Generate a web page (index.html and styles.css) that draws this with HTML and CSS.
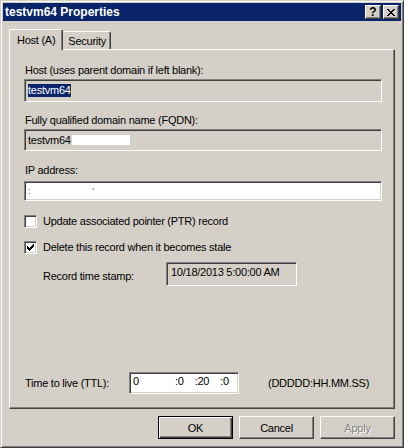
FILE: index.html
```html
<!DOCTYPE html>
<html>
<head>
    <title>testvm64 Properties</title>
    <link rel="stylesheet" href="styles.css">
</head>
<body>
    <div class="window">
        <div class="titlebar">
            <span class="title">testvm64 Properties</span>
            <div class="caption-buttons">
                <span class="cap-btn help">?</span>
                <span class="cap-btn">
                    <svg width="8" height="7" viewBox="0 0 8 7" shape-rendering="crispEdges">
                        <path d="M0 0h2v1h-2zM6 0h2v1h-2zM1 1h2v1h-2zM5 1h2v1h-2zM2 2h4v1h-4zM3 3h2v1h-2zM2 4h4v1h-4zM1 5h2v1h-2zM5 5h2v1h-2zM0 6h2v1h-2zM6 6h2v1h-2z" fill="#000"/>
                    </svg>
                </span>
            </div>
        </div>

        <div class="tabs">
            <div class="tab active">Host (A)</div>
            <div class="tab">Security</div>
        </div>

        <div class="panel">
            <div class="field-label">Host (uses parent domain if left blank):</div>
            <div class="field readonly host-field"><span class="selected">testvm64</span><span class="caret"></span></div>

            <div class="field-label gap-fqdn">Fully qualified domain name (FQDN):</div>
            <div class="field readonly fqdn-field">testvm64<span class="redacted"></span></div>

            <div class="field-label gap-ip">IP address:</div>
            <div class="field ip-field"><span class="ip-bit">:</span><span class="ip-bit ip-bit2">'</span></div>

            <div class="check-row first">
                <span class="checkbox"></span>
                <span>Update associated pointer (PTR) record</span>
            </div>
            <div class="check-row second">
                <span class="checkbox">
                    <svg width="7" height="7" viewBox="0 0 7 7" shape-rendering="crispEdges">
                        <path d="M6 0h1v3h-1zM5 1h1v3h-1zM4 2h1v3h-1zM3 3h1v3h-1zM2 4h1v3h-1zM1 3h1v3h-1zM0 2h1v3h-1z" fill="#000"/>
                    </svg>
                </span>
                <span>Delete this record when it becomes stale</span>
            </div>

            <div class="stamp-row">
                <span class="stamp-label">Record time stamp:</span>
                <div class="field readonly stamp-field">10/18/2013 5:00:00 AM</div>
            </div>

            <div class="ttl-row">
                <span class="ttl-label">Time to live (TTL):</span>
                <div class="field ttl-field">
                    <span class="ttl-days">0</span>
                    <span class="ttl-part">:0</span>
                    <span class="ttl-part">:20</span>
                    <span class="ttl-part">:0</span>
                </div>
                <span class="ttl-format">(DDDDD:HH.MM.SS)</span>
            </div>
        </div>

        <div class="actions">
            <div class="btn default"><span>OK</span></div>
            <div class="btn"><span>Cancel</span></div>
            <div class="btn disabled"><span>Apply</span></div>
        </div>
    </div>
</body>
</html>
```

FILE: styles.css
```css
* {
    box-sizing: border-box;
}
body {
    margin: 0;
    background: #d4d0c8;
    font-family: "Liberation Sans", Arial, sans-serif;
    font-size: 11px;
    letter-spacing: -0.25px;
    color: #000;
}
.window {
    width: 404px;
    height: 448px;
    display: flex;
    flex-direction: column;
    padding: 2px;
    background: #d4d0c8;
    border: 1px solid;
    border-color: #d4d0c8 #404040 #404040 #d4d0c8;
    box-shadow: inset 1px 1px #fff, inset -1px -1px #808080;
}
.titlebar {
    height: 18px;
    display: flex;
    align-items: center;
    justify-content: space-between;
    padding: 0 2px 0 2px;
    background: #0a246a;
}
.title {
    color: #fff;
    font-weight: bold;
    font-size: 12px;
    letter-spacing: 0;
}
.caption-buttons {
    display: flex;
    gap: 2px;
}
.cap-btn {
    width: 16px;
    height: 14px;
    display: flex;
    align-items: center;
    justify-content: center;
    background: #d4d0c8;
    border: 1px solid;
    border-color: #fff #404040 #404040 #fff;
    box-shadow: inset -1px -1px #808080;
}
.help {
    font-weight: bold;
    font-size: 12px;
    letter-spacing: 0;
    line-height: 12px;
}
.tabs {
    height: 20px;
    margin: 8px 6px 0 6px;
    display: flex;
    align-items: flex-end;
}
.tab {
    height: 18px;
    padding: 2px 4px 0 5px;
    background: #d4d0c8;
    border: 1px solid;
    border-bottom: none;
    border-color: #fff #404040 #404040 #fff;
    border-radius: 2px 2px 0 0;
    box-shadow: inset -1px 0 #808080;
    line-height: 14px;
}
.tab.active {
    position: relative;
    z-index: 1;
    height: 21px;
    margin-bottom: -1px;
    padding: 3px 7px 0 7px;
}
.tab + .tab {
    border-left: none;
}
.panel {
    height: 360px;
    margin: 0 6px;
    display: flex;
    flex-direction: column;
    padding: 14px 12px 14px 14px;
    border: 1px solid;
    border-color: #fff #404040 #404040 #fff;
    box-shadow: inset -1px -1px #808080;
}
.field-label {
    height: 13px;
    line-height: 13px;
    padding-left: 1px;
}
.gap-fqdn {
    margin-top: 12px;
}
.gap-ip {
    margin-top: 13px;
}
.field {
    display: flex;
    align-items: center;
    padding: 0 2px 0 3px;
    background: #fff;
    border: 1px solid;
    border-color: #808080 #fff #fff #808080;
    box-shadow: inset 1px 1px #404040, inset -1px -1px #d4d0c8;
    line-height: 13px;
}
.field.readonly {
    background: #d4d0c8;
}
.host-field {
    height: 23px;
    margin-top: 2px;
}
.selected {
    background: #0a246a;
    color: #fff;
}
.caret {
    width: 1px;
    height: 13px;
    background: #f5d58a;
}
.fqdn-field {
    height: 22px;
    margin-top: 2px;
}
.redacted {
    display: inline-block;
    width: 58px;
    height: 10px;
    margin-left: 1px;
    background: #fff;
}
.ip-field {
    height: 20px;
    margin-top: 4px;
}
.ip-bit {
    font-size: 9px;
    color: #555;
}
.ip-bit2 {
    margin-left: 62px;
}
.check-row {
    height: 13px;
    display: flex;
    align-items: center;
    gap: 6px;
    line-height: 13px;
}
.check-row.first {
    margin-top: 14px;
}
.check-row.second {
    margin-top: 13px;
}
.checkbox {
    width: 13px;
    height: 13px;
    display: flex;
    align-items: center;
    justify-content: center;
    background: #fff;
    border: 1px solid;
    border-color: #808080 #fff #fff #808080;
    box-shadow: inset 1px 1px #404040, inset -1px -1px #d4d0c8;
}
.stamp-row {
    margin-top: 8px;
    padding-left: 19px;
    display: flex;
    align-items: center;
}
.stamp-label {
    width: 123px;
    padding-top: 3px;
}
.stamp-field {
    width: 131px;
    height: 24px;
    align-items: flex-start;
    padding-top: 3px;
    padding-left: 4px;
}
.ttl-row {
    margin-top: auto;
    display: flex;
    align-items: center;
}
.ttl-label {
    width: 105px;
    padding-left: 1px;
}
.ttl-field {
    width: 110px;
    height: 22px;
    align-items: flex-start;
    padding-top: 2px;
}
.ttl-days {
    width: 42px;
}
.ttl-part {
    margin-right: 11px;
}
.ttl-part:last-child {
    margin-right: 0;
}
.ttl-format {
    margin-left: 29px;
}
.actions {
    display: flex;
    justify-content: flex-end;
    gap: 6px;
    margin: 7px 6px 0 0;
}
.btn {
    width: 75px;
    height: 23px;
    display: flex;
    align-items: center;
    justify-content: center;
    background: #d4d0c8;
    border: 1px solid;
    border-color: #fff #404040 #404040 #fff;
    box-shadow: inset -1px -1px #808080;
}
.btn.default {
    border-color: #000;
    box-shadow: inset 1px 1px #fff, inset -1px -1px #404040, inset -2px -2px #808080;
}
.btn.disabled {
    color: #808080;
    text-shadow: 1px 1px #fff;
}
```
